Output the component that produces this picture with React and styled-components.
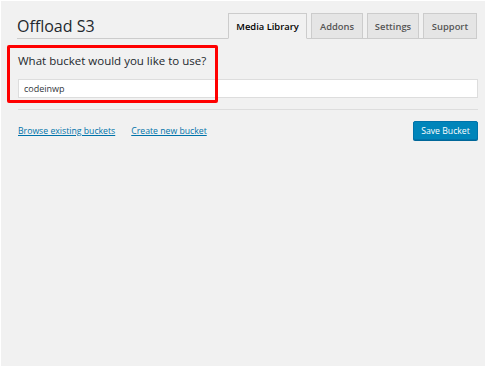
import styled, { createGlobalStyle } from 'styled-components';

const GlobalStyle = createGlobalStyle`
  html, body {
    margin: 0;
    padding: 0;
    background: #fff;
  }
  body {
    font-family: "Open Sans", "Noto Sans", sans-serif;
    color: #23282d;
  }
`;

const Screen = styled.div`
  position: relative;
  box-sizing: border-box;
  width: 484px;
  height: 365px;
  margin: 1px 0 0 1px;
  padding: 12px 8px 0 16px;
  background: #f1f1f1;
`;

const Header = styled.div`
  display: flex;
  align-items: flex-end;
  justify-content: space-between;
  border-bottom: 1px solid #ccc;
  height: 25px;
`;

const Title = styled.h1`
  margin: 0 0 2px;
  font-size: 16px;
  font-weight: 400;
  line-height: 20px;
  color: #23282d;
`;

const Tabs = styled.nav`
  display: flex;
  gap: 4px;
  margin-bottom: -1px;
`;

const Tab = styled.a`
  box-sizing: border-box;
  height: 26px;
  width: ${(p) => p.$w}px;
  display: flex;
  align-items: center;
  justify-content: center;
  border: 1px solid #ccc;
  border-bottom: 1px solid ${(p) => (p.$active ? '#f1f1f1' : '#ccc')};
  background: ${(p) => (p.$active ? '#f1f1f1' : '#e5e5e5')};
  color: ${(p) => (p.$active ? '#000' : '#555')};
  font-size: 9.4px;
  font-weight: 600;
  text-decoration: none;
`;

const Question = styled.h3`
  margin: 14px 0 0 1px;
  font-size: 11.5px;
  font-weight: 400;
  line-height: 16px;
  color: #23282d;
`;

const BucketInput = styled.input`
  box-sizing: border-box;
  display: block;
  width: 460px;
  height: 19px;
  margin: 10px 0 0 1px;
  padding: 0 5px;
  border: 1px solid #ddd;
  background: #fff;
  font-family: inherit;
  font-size: 9px;
  color: #32373c;
  outline: none;
`;

const Divider = styled.hr`
  width: 460px;
  margin: 11px 0 0 1px;
  border: none;
  border-top: 1px solid #ddd;
`;

const Actions = styled.div`
  display: flex;
  align-items: center;
  justify-content: space-between;
  width: 460px;
  margin: 11px 0 0 1px;
`;

const Links = styled.div`
  display: flex;
  gap: 16px;
`;

const Link = styled.a`
  font-size: 8.7px;
  color: #0073aa;
  text-decoration: underline;
`;

const SaveButton = styled.button`
  box-sizing: border-box;
  height: 19px;
  width: 65px;
  padding: 0;
  border: 1px solid #0073aa;
  border-radius: 2px;
  background: #0085ba;
  color: #fff;
  font-family: inherit;
  font-size: 8.7px;
  box-shadow: 0 1px 0 #006799;
`;

const Highlight = styled.div`
  position: absolute;
  left: 6px;
  top: 44px;
  width: 211px;
  height: 58px;
  box-sizing: border-box;
  border: 3px solid #f00;
  border-radius: 2px;
  pointer-events: none;
`;

const tabs = [
  { label: 'Media Library', width: 79, active: true },
  { label: 'Addons', width: 52 },
  { label: 'Settings', width: 52 },
  { label: 'Support', width: 54 },
];

export default function App() {
  return (
    <>
      <GlobalStyle />
      <Screen>
        <Header>
          <Title>Offload S3</Title>
          <Tabs>
            {tabs.map((t) => (
              <Tab key={t.label} $active={t.active} $w={t.width}>
                {t.label}
              </Tab>
            ))}
          </Tabs>
        </Header>
        <Question>What bucket would you like to use?</Question>
        <BucketInput defaultValue="codeinwp" />
        <Divider />
        <Actions>
          <Links>
            <Link href="#">Browse existing buckets</Link>
            <Link href="#">Create new bucket</Link>
          </Links>
          <SaveButton>Save Bucket</SaveButton>
        </Actions>
        <Highlight />
      </Screen>
    </>
  );
}
